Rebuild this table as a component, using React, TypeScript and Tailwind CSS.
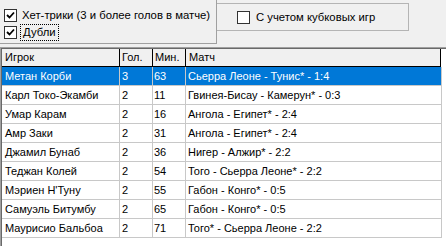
import React from 'react';

interface Row {
  player: string;
  goals: number;
  minute: number;
  match: string;
}

const rows: Row[] = [
  { player: 'Метан Корби', goals: 3, minute: 63, match: 'Сьерра Леоне - Тунис* - 1:4' },
  { player: 'Карл Токо-Экамби', goals: 2, minute: 11, match: 'Гвинея-Бисау - Камерун* - 0:3' },
  { player: 'Умар Карам', goals: 2, minute: 16, match: 'Ангола - Египет* - 2:4' },
  { player: 'Амр Заки', goals: 2, minute: 31, match: 'Ангола - Египет* - 2:4' },
  { player: 'Джамил Бунаб', goals: 2, minute: 36, match: 'Нигер - Алжир* - 2:2' },
  { player: 'Теджан Колей', goals: 2, minute: 54, match: 'Того - Сьерра Леоне* - 2:2' },
  { player: 'Мэриен Н\'Туну', goals: 2, minute: 55, match: 'Габон - Конго* - 0:5' },
  { player: 'Самуэль Битумбу', goals: 2, minute: 65, match: 'Габон - Конго* - 0:5' },
  { player: 'Маурисио Бальбоа', goals: 2, minute: 71, match: 'Того* - Сьерра Леоне - 2:2' },
];

function CheckBox({ checked }: { checked: boolean }) {
  return (
    <div className="w-[13px] h-[13px] shrink-0 bg-white border border-[#333333] flex items-center justify-center">
      {checked && (
        <svg width="11" height="11" viewBox="0 0 11 11">
          <path d="M2 5 L4.5 7.5 L9 2.5" fill="none" stroke="#000" strokeWidth="1.8" />
        </svg>
      )}
    </div>
  );
}

export default function App() {
  return (
    <div className="w-[446px] h-[246px] overflow-hidden bg-[#f0f0f0] text-[11px] text-black font-['Liberation_Sans',Arial,sans-serif]">
      {/* filters */}
      <div className="flex items-start h-[47px] text-[11.3px]">
        <div className="w-[217px] h-[44px] border-r border-b border-[#a0a0a0] pt-[7px] pl-[4px]">
          <div className="flex items-center h-[17px]">
            <CheckBox checked />
            <span className="ml-[3px] px-[2px] leading-[15px] whitespace-nowrap">Хет-трики (3 и более голов в матче)</span>
          </div>
          <div className="flex items-center h-[17px]">
            <CheckBox checked />
            <span className="ml-[3px] px-[2px] h-[17px] leading-[15px] border border-dotted border-black flex items-center whitespace-nowrap">
              Дубли
            </span>
          </div>
        </div>
        <div className="mt-[3px] w-[192px] h-[28px] border-t border-r border-b border-[#b4b4b4] flex items-center pl-[20px]">
          <CheckBox checked={false} />
          <span className="ml-[4px] px-[2px] whitespace-nowrap">С учетом кубковых игр</span>
        </div>
      </div>

      {/* grid */}
      <div className="border-t border-l border-[#a0a0a0] h-[199px]">
        <div className="border-t border-l border-[#696969] h-full bg-white">
          <div className="flex h-[18px] bg-[#f0f0f0]">
            <div className="w-[118px] border-r border-b border-black pl-[3px] flex items-center">Игрок</div>
            <div className="w-[33px] border-r border-b border-black pl-[2px] flex items-center">Гол.</div>
            <div className="w-[33px] border-r border-b border-black pl-[2px] flex items-center">Мин.</div>
            <div className="w-[255px] border-r border-b border-black pl-[3px] flex items-center">Матч</div>
            <div className="flex-1 bg-white" />
          </div>
          {rows.map((r, i) => (
            <div
              key={r.player}
              className={`flex h-[19px] w-[440px] border-b border-[#c8c8c8] ${i === 0 ? 'bg-[#0078d7] text-white' : ''}`}
            >
              <div className="w-[118px] border-r border-[#c8c8c8] pl-[3px] flex items-center whitespace-nowrap">{r.player}</div>
              <div className="w-[33px] border-r border-[#c8c8c8] pl-[2px] flex items-center">{r.goals}</div>
              <div className="w-[33px] border-r border-[#c8c8c8] pl-[1px] flex items-center">{r.minute}</div>
              <div className="w-[256px] border-r border-[#c8c8c8] pl-[2px] flex items-center whitespace-nowrap">{r.match}</div>
            </div>
          ))}
        </div>
      </div>
    </div>
  );
}
